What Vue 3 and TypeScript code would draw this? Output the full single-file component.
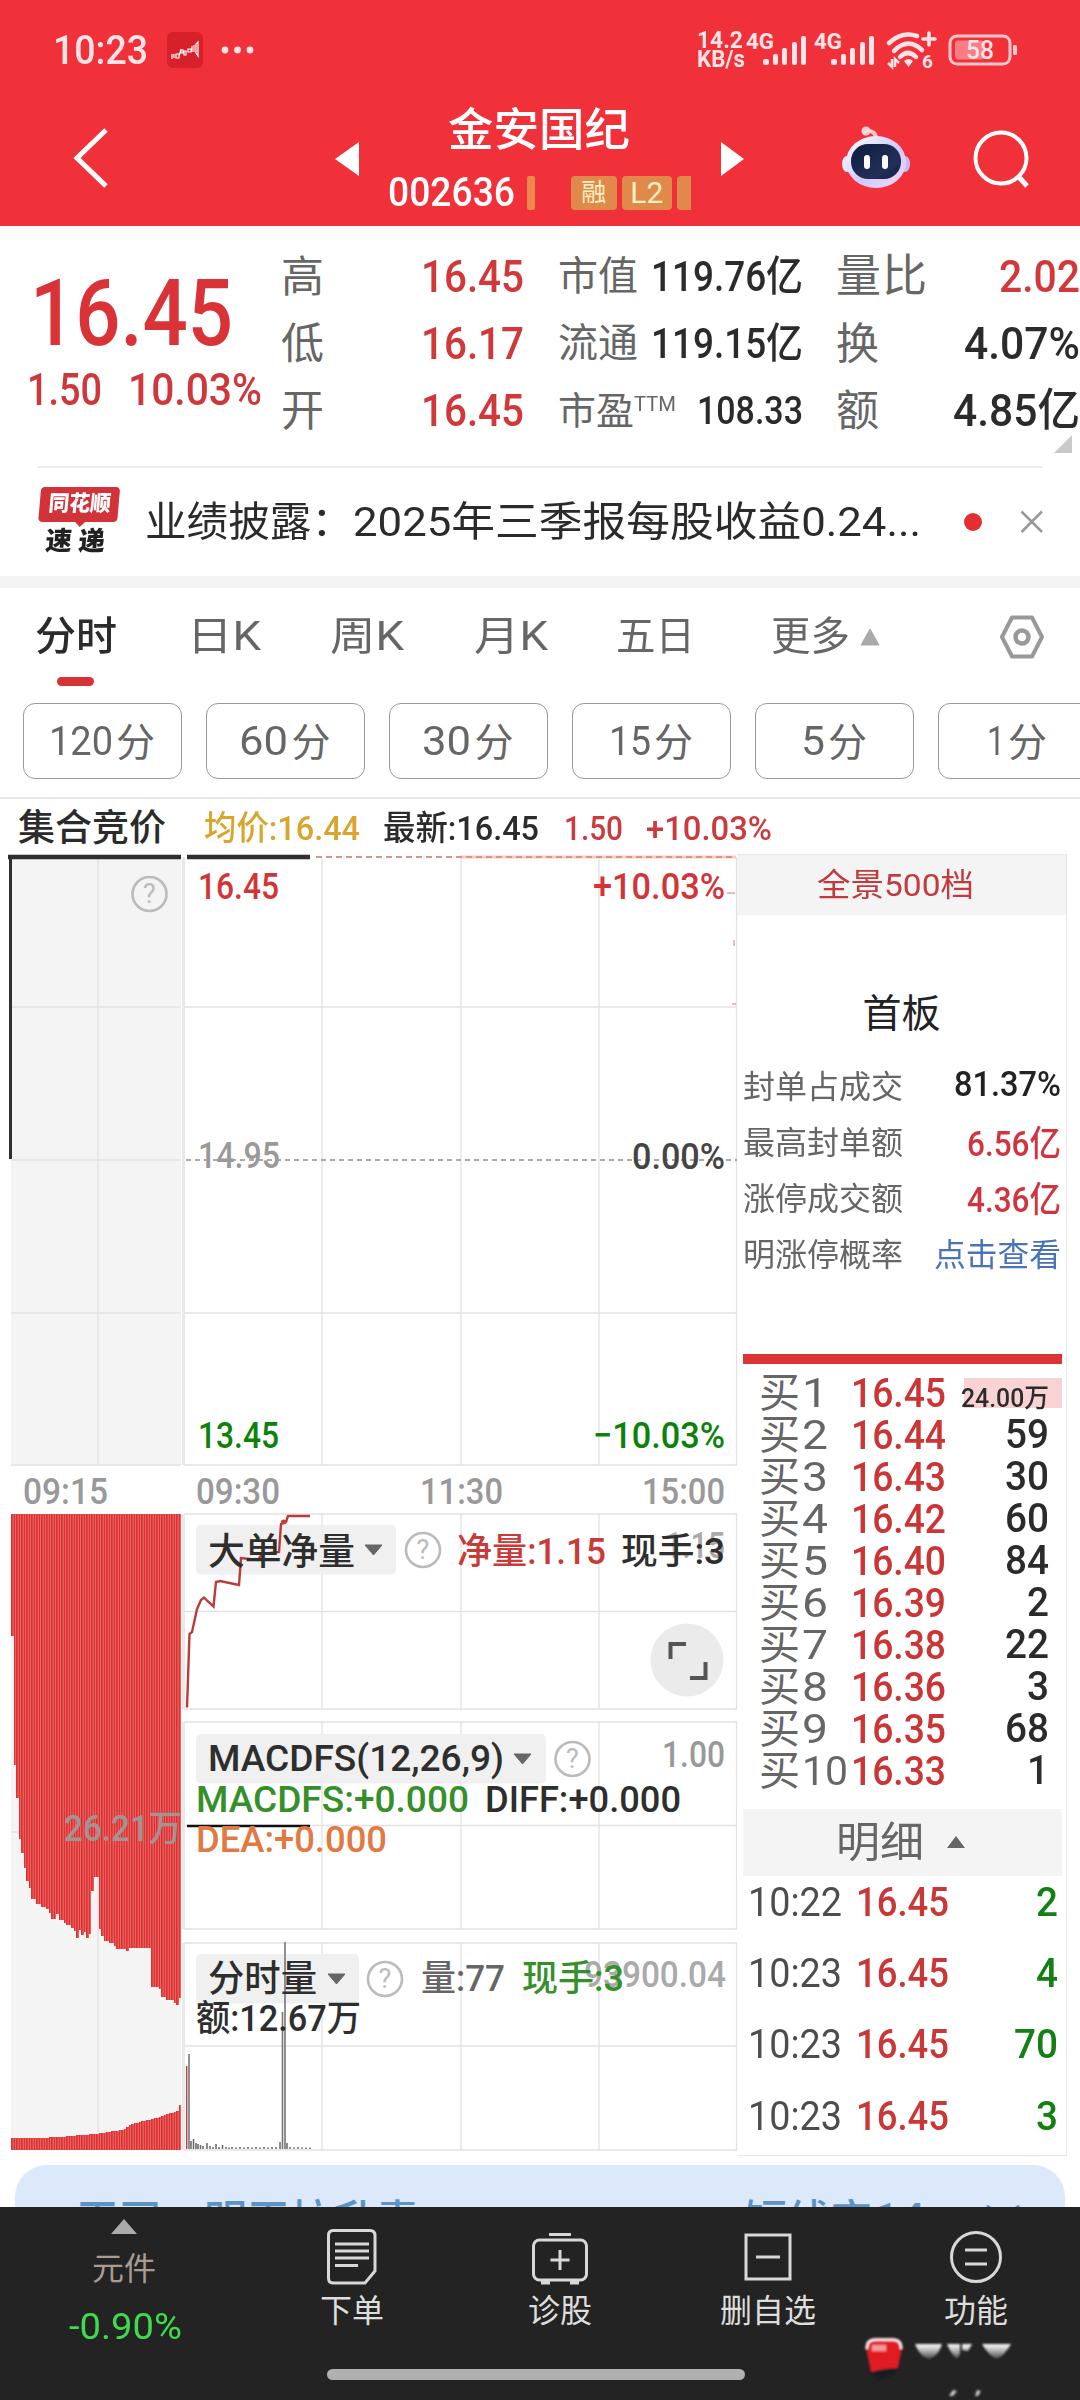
<script setup lang="ts">
interface Label { t: string; x: number; y: number; w: number; s: number; c: string; b?: number }
type Point = [number, number]

// Scales a piece of text horizontally so it takes exactly the given width.
const vFit = {
  mounted(el: HTMLElement, binding: { value: number }) {
    el.style.display = 'inline-block'
    el.style.whiteSpace = 'nowrap'
    el.style.width = 'max-content'
    el.style.flex = 'none'
    const natural = el.getBoundingClientRect().width
    el.style.transformOrigin = '0 50%'
    el.style.transform = `scaleX(${binding.value / natural})`
    el.style.marginRight = `${binding.value - natural}px`
  },
}

const RED = '#d23537'
const INK = '#2e2e2e'
const GREY = '#999'
const GREEN = '#0c820c'

const tabs = [
  { t: '日K', w: 74, gap: 70 },
  { t: '周K', w: 74, gap: 69 },
  { t: '月K', w: 74, gap: 70 },
  { t: '五日', w: 79, gap: 68 },
  { t: '更多', w: 79, gap: 76 },
]
const periods = [
  { n: '120', w: 64 }, { n: '60', w: 49 }, { n: '30', w: 49 },
  { n: '15', w: 42 }, { n: '5', w: 24 }, { n: '1', w: 18 },
]

const stats = [
  { k: '封单占成交', v: '81.37%', w: 107, cls: 'ink' },
  { k: '最高封单额', v: '6.56亿', w: 94, cls: 'crimson' },
  { k: '涨停成交额', v: '4.36亿', w: 94, cls: 'crimson' },
  { k: '明涨停概率', v: '点击查看', w: 127, cls: 'link' },
]
const bids = [
  ['1', '16.45', '24.00万'], ['2', '16.44', '59'], ['3', '16.43', '30'], ['4', '16.42', '60'],
  ['5', '16.40', '84'], ['6', '16.39', '2'], ['7', '16.38', '22'], ['8', '16.36', '3'],
  ['9', '16.35', '68'], ['10', '16.33', '1'],
]
const trades = [
  ['10:22', '16.45', '2'], ['10:23', '16.45', '4'], ['10:23', '16.45', '70'], ['10:23', '16.45', '3'],
]

const labels: Label[] = [
  { t: '16.45', x: 198, y: 899, w: 81, s: 37, c: RED, b: 500 },
  { t: '+10.03%', x: 593, y: 899, w: 132, s: 37, c: RED, b: 500 },
  { t: '14.95', x: 198, y: 1168, w: 82, s: 36, c: GREY, b: 500 },
  { t: '0.00%', x: 632, y: 1169, w: 93, s: 36, c: '#444', b: 500 },
  { t: '13.45', x: 198, y: 1448, w: 81, s: 37, c: GREEN, b: 500 },
  { t: '−10.03%', x: 593, y: 1448, w: 132, s: 37, c: GREEN, b: 500 },
  { t: '09:15', x: 23, y: 1504, w: 85, s: 36, c: GREY, b: 500 },
  { t: '09:30', x: 196, y: 1504, w: 84, s: 36, c: GREY, b: 500 },
  { t: '11:30', x: 420, y: 1504, w: 83, s: 36, c: GREY, b: 500 },
  { t: '15:00', x: 642, y: 1504, w: 83, s: 36, c: GREY, b: 500 },
  { t: '26.21万', x: 64, y: 1841, w: 118, s: 36, c: '#a39494', b: 500 },
  { t: '大单净量', x: 208, y: 1565, w: 147, s: 37, c: INK, b: 500 },
  { t: '1.15', x: 665, y: 1558, w: 60, s: 36, c: '#aaa', b: 500 },
  { t: '净量:1.15', x: 457, y: 1564, w: 149, s: 36, c: '#c93a38', b: 500 },
  { t: '现手:3', x: 621, y: 1564, w: 104, s: 36, c: INK, b: 500 },
  { t: 'MACDFS(12,26,9)', x: 208, y: 1771, w: 296, s: 37, c: INK, b: 500 },
  { t: '1.00', x: 662, y: 1767, w: 63, s: 36, c: GREY, b: 500 },
  { t: 'MACDFS:+0.000', x: 196, y: 1812, w: 273, s: 37, c: '#35902a', b: 500 },
  { t: 'DIFF:+0.000', x: 485, y: 1812, w: 196, s: 37, c: INK, b: 500 },
  { t: 'DEA:+0.000', x: 196, y: 1852, w: 191, s: 37, c: '#e07a42', b: 500 },
  { t: '分时量', x: 208, y: 1992, w: 109, s: 37, c: INK, b: 500 },
  { t: '量:77', x: 421, y: 1991, w: 84, s: 36, c: '#666', b: 500 },
  { t: '93900.04', x: 584, y: 1987, w: 142, s: 36, c: '#aaa', b: 500 },
  { t: '现手:3', x: 522, y: 1991, w: 102, s: 36, c: '#35902a', b: 500 },
  { t: '额:12.67万', x: 196, y: 2031, w: 165, s: 36, c: INK, b: 500 },
]

const pills = [
  { x: 196, y: 1525, w: 200, ax: 365, q: 423 },
  { x: 196, y: 1734, w: 350, ax: 514, q: 572.5 },
  { x: 196, y: 1954, w: 163, ax: 328, q: 385 },
]

// Call-auction depth: lower edge of the hanging bars, upper edge of the rising ones.
const hang: Point[] = [
  [11, 1636], [13.4, 1765], [15.8, 1798], [18, 1839], [20.5, 1853], [23, 1868], [26, 1881], [28.5, 1888], [31, 1899],
  [35, 1904], [40, 1907], [44, 1909], [47, 1913], [50, 1919], [54, 1914], [58, 1920], [62, 1923], [66, 1925], [70, 1928],
  [73, 1931], [75, 1938], [77, 1930], [80, 1935], [83, 1932], [86, 1938], [88.5, 1934], [90.5, 1891], [93.5, 1877],
  [96.5, 1929], [99, 1936], [102, 1941], [107, 1943], [112, 1946], [116, 1949], [125, 1951], [128, 1948], [149.5, 1987],
  [158, 1989], [160, 1997], [165, 2000], [172, 2003], [176, 2005], [178, 1998], [182, 1998],
]
const rise: Point[] = [
  [11, 2138], [40, 2138], [65, 2136.5], [80, 2135], [95, 2134], [108, 2132], [125, 2129], [127.5, 2125], [140, 2121.5],
  [155, 2118], [165, 2114], [177, 2111], [178, 2105], [182, 2105],
]
const levelAt = (pts: Point[], x: number): number => {
  let v = pts[0][1]
  for (const p of pts) if (p[0] <= x + 0.01) v = p[1]
  return v
}
const smoothAt = (pts: Point[], x: number): number => {
  for (let i = 1; i < pts.length; i++) {
    if (x <= pts[i][0]) {
      const [x0, y0] = pts[i - 1]
      const [x1, y1] = pts[i]
      return y0 + ((y1 - y0) * (x - x0)) / (x1 - x0)
    }
  }
  return pts[pts.length - 1][1]
}
const auction = Array.from({ length: 68 }, (_, i) => {
  const x = 11 + i * 2.5
  return { x, bottom: levelAt(hang, x), top: smoothAt(rise, x) }
})

const volumes: Point[] = [
  [191, 8], [193.5, 10], [196, 6], [198, 5], [200.5, 4], [203, 3], [207, 6], [210, 3], [213, 2], [216, 5], [219, 2],
  [222.5, 4], [226, 2], [229, 1.5], [232, 2], [236, 1.5], [240, 2], [244, 1.5], [248, 2], [252, 1.5], [256, 2],
  [260, 1.5], [264, 2], [268, 1.5], [272, 2], [276, 2], [280, 7], [287, 6], [290, 2], [294, 1.5], [298, 2],
  [302, 1.5], [306, 1.5], [310, 1.5],
]
</script>

<template>
  <div class="screen">
    <header class="top">
      <div class="status">
        <span class="clock" v-fit="95">10:23</span>
        <svg class="appicon" width="36" height="36" viewBox="0 0 36 36">
          <rect width="36" height="36" rx="6" fill="#d6212a" />
          <g fill="none" stroke="#fff" stroke-width="1.2">
            <path d="M5 22v5M7 22v4M9 22h3v4h-3zM12 24l2-7M14 18h2v3h-2zM17 19h2v4h-2zM21 17h3v3h-3zM25 14v6M27 13v7M29 12l2-2v14l-2-3z" />
          </g>
        </svg>
        <svg class="dots" width="34" height="8"><circle cx="4" cy="4" r="3.4" /><circle cx="16.5" cy="4" r="3.4" /><circle cx="29" cy="4" r="3.4" /></svg>
        <div class="speed"><span v-fit="46">14.2</span><span v-fit="48">KB/s</span></div>
        <svg v-for="n in 2" :key="n" class="signal" width="62" height="36" viewBox="0 0 62 36">
          <text x="0" y="16.5" textLength="28" lengthAdjust="spacingAndGlyphs">4G</text>
          <g fill="#ffe3e6">
            <rect x="17" y="27" width="6" height="6" rx="2" /><rect x="27" y="22" width="5" height="11" rx="2" />
            <rect x="36" y="16" width="5" height="17" rx="2" /><rect x="46" y="10" width="5" height="23" rx="2" />
            <rect x="55" y="4" width="5" height="29" rx="2" />
          </g>
        </svg>
        <svg class="wifi" width="52" height="40" viewBox="0 0 52 40">
          <g fill="none" stroke="#ffe3e6" stroke-width="4.5" stroke-linecap="round">
            <path d="M3 13 Q16 1 31 6" /><path d="M8 21 Q22 7 36 20" /><path d="M14 27 Q22 19 30 27" />
            <path d="M43 3v12M37 9h12" stroke-width="3.6" />
          </g>
          <path d="M18 31 q4.500 -4 9 0 l-4.500 6z" fill="#ffe3e6" />
          <path d="M6 29v8l-4-4M9 37v-8l4 4" fill="none" stroke="#ffe3e6" stroke-width="2.500" />
          <text x="36" y="38">6</text>
        </svg>
        <svg class="battery" width="72" height="32" viewBox="0 0 72 32">
          <rect x="2" y="2" width="60" height="28" rx="7" fill="none" stroke="#ffc6cb" stroke-width="3" />
          <rect x="7" y="6.500" width="29" height="19" rx="3" fill="#fb7d83" />
          <rect x="65" y="11" width="4" height="10" rx="1.500" fill="#ffc6cb" />
          <text x="18" y="24.500" textLength="28" lengthAdjust="spacingAndGlyphs">58</text>
        </svg>
      </div>
      <div class="titlebar">
        <svg class="back" width="36" height="64" viewBox="0 0 36 64"><path d="M33 4 L4 32 L33 60" fill="none" stroke="#fff" stroke-width="5" /></svg>
        <svg class="prev" width="24" height="36"><path d="M0 18 L24 1 V35z" fill="#fff" /></svg>
        <div class="name">
          <div class="stock" v-fit="182">金安国纪</div>
          <div class="code">
            <span class="digits" v-fit="127">002636</span>
            <i class="stub"></i>
            <b class="tag rong">融</b><b class="tag l2">L2</b><b class="tag cut"></b>
          </div>
        </div>
        <svg class="next" width="24" height="36"><path d="M0 1 L23 18 L0 35z" fill="#fff" /></svg>
        <svg class="robot" width="68" height="64" viewBox="0 0 68 64">
          <defs>
            <linearGradient id="shell" x1="0" y1="0" x2="1" y2="1"><stop offset="0" stop-color="#fff" /><stop offset=".55" stop-color="#cfc9fb" /><stop offset="1" stop-color="#f9d9ee" /></linearGradient>
            <linearGradient id="visor" x1="0" y1="0" x2="1" y2="1"><stop offset="0" stop-color="#0f1b3f" /><stop offset=".7" stop-color="#223058" /><stop offset="1" stop-color="#131a45" /></linearGradient>
          </defs>
          <path d="M24 5 Q34 4 34 13" fill="none" stroke="#ffc9d0" stroke-width="4" /><circle cx="24" cy="5" r="4.500" fill="#ffd5da" />
          <ellipse cx="5" cy="38" rx="5" ry="8" fill="#e9e6ff" /><ellipse cx="63" cy="38" rx="5" ry="8" fill="#c9b8f5" />
          <ellipse cx="34" cy="36" rx="30" ry="26" fill="url(#shell)" />
          <rect x="9" y="18" width="50" height="35" rx="17" fill="url(#visor)" />
          <rect x="22" y="29" width="6" height="14" rx="3" fill="#fff" /><rect x="40" y="29" width="6" height="14" rx="3" fill="#fff" />
        </svg>
        <svg class="search" width="60" height="60" viewBox="0 0 60 60"><circle cx="29" cy="28" r="25.500" fill="none" stroke="#fff" stroke-width="4" /><path d="M46 46 L55 56" stroke="#fff" stroke-width="5" /></svg>
      </div>
    </header>

    <section class="quote">
      <div class="last">
        <div class="price" v-fit="203">16.45</div>
        <div class="change"><span v-fit="75">1.50</span><span v-fit="134">10.03%</span></div>
      </div>
      <div class="col c1"><div><em>高</em><span v-fit="103">16.45</span></div><div><em>低</em><span v-fit="103">16.17</span></div><div><em>开</em><span v-fit="103">16.45</span></div></div>
      <div class="col c2">
        <div><em>市值</em><span v-fit="152">119.76亿</span></div><div><em>流通</em><span v-fit="152">119.15亿</span></div>
        <div><em class="pe">市盈<sup v-fit="42">TTM</sup></em><span class="small" v-fit="106">108.33</span></div>
      </div>
      <div class="col c3"><div><em class="ratio">量比</em><span class="red" v-fit="81">2.02</span></div><div><em>换</em><span v-fit="116">4.07%</span></div><div><em>额</em><span v-fit="127">4.85亿</span></div></div>
    </section>
    <svg class="corner" width="18" height="18"><path d="M18 0V18H0z" fill="#c9c9c9" /></svg>

    <section class="news">
      <div class="brand"><div class="bubble"><span v-fit="65">同花顺</span></div><div class="express"><span v-fit="62">速 递</span></div></div>
      <div class="headline"><span v-fit="208">业绩披露：</span><span v-fit="568">2025年三季报每股收益0.24...</span></div>
      <i class="reddot"></i>
      <svg class="close" width="24" height="24"><path d="M1.500 1.500 L22 22 M22 1.500 L1.500 22" stroke="#999" stroke-width="2.500" /></svg>
    </section>

    <nav class="tabs">
      <div class="active"><span v-fit="82">分时</span></div>
      <span v-for="t in tabs" :key="t.t" :style="{ marginLeft: t.gap + 'px' }"><span v-fit="t.w">{{ t.t }}</span></span>
      <svg class="up" width="20" height="18"><path d="M10 1 L19 17 H1z" fill="#aaa" stroke="#aaa" stroke-linejoin="round" /></svg>
      <svg class="gear" width="46" height="46" viewBox="0 0 46 46"><path d="M13 3.500 H33 L43 23 L33 42.500 H13 L3 23z" fill="none" stroke="#999" stroke-width="4" stroke-linejoin="round" /><circle cx="23" cy="23" r="6.500" fill="none" stroke="#999" stroke-width="4.500" /></svg>
    </nav>
    <div class="periods"><button v-for="p in periods" :key="p.n"><span v-fit="p.w">{{ p.n }}</span><span class="fen">分</span></button></div>

    <div class="info">
      <span class="auction" v-fit="148">集合竞价</span><span class="avg" v-fit="156">均价:16.44</span><span class="new" v-fit="156">最新:16.45</span>
      <span class="r1" v-fit="59">1.50</span><span class="r2" v-fit="126">+10.03%</span>
    </div>

    <main class="board">
      <svg class="chart" width="737" height="1308" viewBox="0 852 737 1308">
        <rect x="11" y="857" width="170" height="608" fill="#f4f4f4" /><rect x="11" y="1514" width="170" height="636" fill="#f4f4f4" />
        <path d="M98 857V1465M98 1514V2150M11 1007H181M11 1160H181M11 1313H181M11 1465H181M11 1832H181" stroke="#e2e2e2" stroke-width="1.500" />
        <path d="M183.500 857V1465M183.500 1514V1709M183.500 1722V1929M183.500 1943V2150" stroke="#e9e9e9" stroke-width="3" />
        <g stroke="#e2e2e2" stroke-width="1.300" fill="none">
          <path v-for="x in [322, 461, 599, 736.500]" :key="x" :d="`M${x} 857V1465M${x} 1514V1709M${x} 1722V1929M${x} 1943V2150`" />
          <path v-for="y in [1007, 1313, 1465, 1514, 1611.500, 1709, 1722, 1825.500, 1929, 1943, 2046, 2150]" :key="y" :d="`M184 ${y}H737`" />
        </g>
        <path d="M186 1160H737" stroke="#aaa" stroke-width="2" stroke-dasharray="5 4" />
        <path d="M460 857H736" stroke="#f6c9c2" stroke-width="3" /><path d="M316 857H736" stroke="#d09a85" stroke-width="2" stroke-dasharray="6 4" />
        <path d="M8 857H181M187 857H310" stroke="#2f2f2f" stroke-width="4.500" /><path d="M10.500 857V1159" stroke="#2f2f2f" stroke-width="3" />
        <path d="M727 893h8M734 940v6M732 1004h4" stroke="#e9bcbc" stroke-width="2" />
        <g v-for="b in auction" :key="b.x">
          <path :d="`M${b.x} 1514h2.500V${b.bottom}h-2.500zM${b.x} ${b.top}h2.500V2150h-2.500z`" fill="#dc3234" shape-rendering="crispEdges" />
          <path :d="`M${b.x + 2.200} 1514V${b.bottom}M${b.x + 2.200} ${b.top}V2150`" stroke="#f79a94" stroke-width="0.600" />
        </g>

        <g v-for="p in pills" :key="p.y">
          <rect :x="p.x" :y="p.y" :width="p.w" height="49.500" rx="5" fill="#efefef" fill-opacity=".94" />
          <path :d="`M${p.ax} ${p.y + 20}h17l-8.500 10z`" fill="#666" stroke="#666" stroke-linejoin="round" />
          <circle :cx="p.q" :cy="p.y + 25" r="17" fill="none" stroke="#bbb" stroke-width="2.600" />
          <text class="q" :x="p.q" :y="p.y + 34">?</text>
        </g>
        <circle cx="149.500" cy="894" r="17" fill="none" stroke="#bbb" stroke-width="2.600" /><text class="q" x="149.500" y="903">?</text>

        <path d="M187 1707.500L189.500 1634L192 1632L197 1609L201 1600L204 1597.500L208 1601.500L213.500 1606.500L216 1582L220 1581L239 1585L241 1558L258 1560L262 1554L279 1552L281 1524L286 1522L288 1516H310" fill="none" stroke="#bc3b39" stroke-width="2.400" />
        <circle cx="283.500" cy="1522" r="2.500" fill="#c93a38" />
        <path d="M187 1826H310" stroke="#111" stroke-width="2.500" />
        <path d="M186.700 2066V2149" stroke="#b04a4a" stroke-width="1.500" /><path d="M189 2054V2149M282.500 2012V2149M285 1942V2149" stroke="#777" stroke-width="1.600" />
        <path v-for="v in volumes" :key="v[0]" :d="`M${v[0]} 2149V${2149 - v[1]}`" stroke="#666" stroke-width="1.500" />
        <circle cx="687" cy="1660" r="36.500" fill="#ebebeb" />
        <path d="M670.500 1659V1644H686M690 1678H705.500V1662" fill="none" stroke="#555" stroke-width="4" />
        <text v-for="l in labels" :key="l.t + l.y" :x="l.x" :y="l.y" :font-size="l.s" :fill="l.c" :font-weight="l.b ?? 400" :textLength="l.w" lengthAdjust="spacingAndGlyphs">{{ l.t }}</text>
      </svg>

      <aside class="book">
        <div class="depth"><span v-fit="157">全景500档</span></div>
        <div class="board-name">首板</div>
        <div class="stats"><div v-for="s in stats" :key="s.k"><span v-fit="160">{{ s.k }}</span><span :class="s.cls" v-fit="s.w">{{ s.v }}</span></div></div>
        <div class="redbar"></div>
        <div class="bids">
          <div v-for="(b, i) in bids" :key="b[0]" class="bid">
            <span class="who"><span>买</span><span v-fit="b[0].length > 1 ? 46 : 26">{{ b[0] }}</span></span>
            <span class="bp"><span v-fit="95">{{ b[1] }}</span></span>
            <span :class="['vol', { first: i === 0 }]"><span v-fit="i === 0 ? 88 : b[2].length * 22">{{ b[2] }}</span></span>
          </div>
        </div>
        <div class="detail"><span v-fit="88">明细</span><svg width="18" height="13"><path d="M9 0L18 12H0z" fill="#666" /></svg></div>
        <div class="trades">
          <div v-for="(t, i) in trades" :key="i"><span v-fit="94">{{ t[0] }}</span><span class="tp" v-fit="93">{{ t[1] }}</span><span class="tv"><span v-fit="t[2].length * 22">{{ t[2] }}</span></span></div>
        </div>
      </aside>
    </main>

    <div class="promo"><span class="p1">天司</span><span class="p2">明天拉升青</span><span class="p3">短线宝<b>14</b></span><span class="p4">﹀</span></div>

    <footer class="dock">
      <div class="index"><svg width="26" height="15"><path d="M13 0L26 15H0z" fill="#ababab" /></svg><span class="iname">元件</span><span class="pct" v-fit="113">-0.90%</span></div>
      <div class="item"><svg width="60" height="60" viewBox="0 0 60 60"><path d="M11 3.500H48Q53 3.500 53 8.500V44L43 56H11Q6.500 56 6.500 51V8.500Q6.500 3.500 11 3.500z" /><path d="M13 17H47M13 24H47M13 31H47M13 38.500H36" /></svg><span>下单</span></div>
      <div class="item"><svg width="60" height="60" viewBox="0 0 60 60"><rect x="3.500" y="13" width="53" height="40" rx="6" /><path d="M19 7.500H41M30 23V43M20.500 33H39.500" /><path d="M11 55.500h9M40 55.500h9" stroke-width="4" /></svg><span>诊股</span></div>
      <div class="item"><svg width="60" height="60" viewBox="0 0 60 60"><rect x="8" y="8" width="44" height="44" /><path d="M18 30H42" /></svg><span>删自选</span></div>
      <div class="item"><svg width="60" height="60" viewBox="0 0 60 60"><circle cx="30" cy="30" r="24.500" /><path d="M19 23H41M19 37H41" /></svg><span>功能</span></div>
      <i class="home"></i>
      <svg class="mark" width="210" height="66" viewBox="0 0 210 66">
        <defs>
          <linearGradient id="fade" x1="0" y1="0" x2="0" y2="1"><stop offset="0" stop-color="#fff" /><stop offset=".5" stop-color="#aaa" /><stop offset="1" stop-color="#444" /></linearGradient>
          <filter id="soft" x="-10%" y="-10%" width="120%" height="120%"><feGaussianBlur stdDeviation="0.800" /></filter>
        </defs>
        <g filter="url(#soft)">
          <path d="M3 36L34 33L28 40L14 46z" fill="#171b24" />
          <path d="M1 14Q1 4 10 4H28Q37 4 37 14L33 34Q20 34 6 38z" fill="#e01b22" /><path d="M1.500 15Q1.500 5.500 10 5.500H28Q36.500 5.500 36.500 15" fill="none" stroke="#fff" stroke-width="2.500" />
          <path d="M7 11h14v6h-14z" fill="#f29a9a" />
          <path d="M50 10H77Q73 23 64 25Q55 23 50 10zM82 10H95V20L92 25Q86 20 82 10zM97 10H107L103 17L97 16zM117 10H146Q139 22 132 25Q124 22 117 10z" fill="url(#fade)" />
          <path d="M84 62l4-6 4 1-4 5zM110 62l2-6 4 1-3 5z" fill="#ccc" />
        </g>
      </svg>
    </footer>
  </div>
</template>

<style>
body { background: #fff; }
</style>

<style scoped>
.screen { width: 1080px; height: 2400px; overflow: hidden; background: #fff; display: flex; flex-direction: column; font-family: Roboto, "Noto Sans CJK SC", sans-serif; color: #333; }
.screen svg { flex: none; display: block; overflow: visible; }
em, i { font-style: normal; }
.top { height: 226px; background: #f13139; color: #fff; flex: none; }
.status { height: 100px; display: flex; align-items: center; color: #ffe3e6; }
.clock { font-size: 40px; margin-left: 53px; font-weight: 500; }
.appicon { margin-left: 19px; }
.dots { margin-left: 18px; fill: #ffe3e6; }
.speed { margin-left: 442px; width: 49px; display: flex; flex-direction: column; font-size: 23px; line-height: 19px; font-weight: 700; }
.signal { margin-right: 6px; }
.signal text { font: 700 22px Roboto; fill: #ffe3e6; }
.wifi { margin-left: 4px; }
.wifi text { font: 700 19px Roboto; fill: #ffe3e6; }
.battery { margin-left: 10px; }
.battery text { font: 500 25px Roboto; fill: #ffe3e6; }
.titlebar { height: 126px; display: flex; align-items: flex-start; }
.back { margin: 26px 0 0 73px; }
.prev { margin: 41px 0 0 226px; }
.name { margin: 5px 0 0 29px; width: 303px; }
.stock { margin-left: 60px; font-size: 45px; line-height: 52px; font-weight: 500; }
.code { display: flex; align-items: center; height: 34px; margin-top: 19px; }
.digits { font-size: 40px; line-height: 34px; font-weight: 500; }
.stub { width: 8px; height: 34px; background: #ee874b; margin: 0 36px 0 12px; border-radius: 2px; }
.tag { height: 34px; background: #e0894b; border-radius: 4px; color: #fff1c4; font-weight: 400; font-size: 25px; line-height: 34px; text-align: center; margin-right: 5px; }
.rong { width: 46px; }
.l2 { width: 51px; font-size: 30px; }
.cut { width: 14px; margin: 0; border-radius: 4px 0 0 4px; }
.next { margin: 41px 0 0 30px; }
.robot { margin: 26px 0 0 97px; }
.search { margin: 30px 0 0 62px; }

.quote { height: 240px; flex: none; display: flex; }
.last { width: 281px; padding-top: 41px; color: #d93337; font-weight: 500; flex: none; }
.price { font-size: 92px; line-height: 94px; margin-left: 30px; }
.change { margin-left: 27px; display: flex; gap: 26px; font-size: 45px; line-height: 50px; margin-top: 4px; color: #cf383b; font-weight: 500; }
.col { padding-top: 17px; }
.col > div { height: 67px; display: flex; align-items: center; justify-content: space-between; }
.col em { color: #666; font-size: 43px; line-height: 60px; }
.col em.ratio { font-size: 45px; letter-spacing: 1px; }
.col span { font-size: 45px; line-height: 60px; font-weight: 500; color: #2b2b2b; }
.col.c1 { width: 243px; }
.col.c1 span, .col span.red { color: #d0383a; }
.col.c2 { width: 245px; margin-left: 34px; }
.col.c2 em { font-size: 40px; }
.col.c2 span { font-size: 42px; }
.col.c2 span.small { font-size: 39px; }
.col.c2 em.pe { font-size: 38px; display: flex; }
.pe sup { font-size: 21px; line-height: 34px; margin-top: 6px; }
.col.c3 { width: 244px; margin-left: 33px; }
.corner { margin: -31px 0 13px 1054px; }
.news { height: 108px; flex: none; margin: 0; display: flex; align-items: center; border-bottom: 12px solid #f4f4f4; background: linear-gradient(#eee, #eee) 37px 0 / 1006px 2px no-repeat; padding-top: 2px; }
.brand { width: 79px; margin: 2px 0 0 38px; transform: skewX(-5deg); }
.bubble { background: #d23339; height: 35px; border-radius: 4px; color: #fff; font-weight: 900; font-size: 22px; line-height: 34px; display: flex; justify-content: center; }
.bubble::after { content: ""; position: absolute; top: 34px; left: 36px; border: 6px solid transparent; border-top-color: #d23339; }
.express { font-weight: 900; font-size: 26px; line-height: 30px; color: #222; padding-left: 9px; height: 34px; margin-top: 4px; }
.headline { margin-left: 28px; width: 776px; font-size: 41px; line-height: 60px; display: flex; color: #2b2b2b; }
.reddot { width: 18px; height: 18px; border-radius: 9px; background: #e32f2f; margin-left: 43px; }
.close { margin-left: 38px; }

.tabs { height: 97px; flex: none; display: flex; align-items: center; font-size: 40px; color: #666; position: relative; padding-left: 35px; box-sizing: border-box; line-height: 60px; }
.active { color: #2b2b2b; font-weight: 500; position: relative; }
.active::after { content: ""; position: absolute; left: 22px; top: 70px; width: 37px; height: 9px; border-radius: 5px; background: #d73337; }
.up { margin-left: 10px; }
.gear { margin-left: 119px; }
.periods { display: flex; gap: 24px; padding: 18px 0 0 23px; height: 94px; flex: none; border-bottom: 2px solid #e6e6e6; overflow: hidden; }
.periods button { flex: none; width: 159px; height: 76px; box-sizing: border-box; border: 1.500px solid #999; border-radius: 12px; background: #fff; font: 400 41px Roboto, "Noto Sans CJK SC", sans-serif; color: #666; display: flex; align-items: center; justify-content: center; padding: 0 1px 0 0; }
.fen { font-size: 39px; margin: 0 0 5px 3px; }

.info { height: 53px; flex: none; display: flex; align-items: center; font-size: 34px; line-height: 56px; padding-top: 4px; box-sizing: border-box; }
.auction { margin-left: 18px; font-size: 37px; font-weight: 500; color: #2b2b2b; padding-top: 2px; }
.avg { margin-left: 38px; color: #d9a52c; font-weight: 500; }
.new { margin-left: 23px; font-weight: 500; color: #2b2b2b; }
.r1 { margin-left: 25px; color: #cb3a3c; font-weight: 500; }
.r2 { margin-left: 23px; color: #cb3a3c; font-weight: 500; }

.board { height: 1308px; flex: none; display: flex; }
.chart text { font-family: Roboto, "Noto Sans CJK SC", sans-serif; }
.chart text.q { font-size: 27px; fill: #bbb; text-anchor: middle; }
.book { width: 330px; height: 1302px; margin-top: 2px; border: 1.500px solid #e6e6e6; border-left: 0; box-sizing: border-box; }
.depth { height: 60px; background: #f4f4f4; display: flex; justify-content: center; font-size: 32px; line-height: 60px; color: #c03a3e; margin-right: 12px; box-shadow: 12px 0 #f4f4f4; }
.board-name { font-size: 39px; line-height: 60px; text-align: center; margin-top: 69px; color: #222; }
.stats { margin: 12px 5px 0 6px; }
.stats > div { height: 56px; display: flex; align-items: center; justify-content: space-between; font-size: 32px; color: #666; }
.stats .ink { font-size: 35px; color: #222; font-weight: 500; }
.stats .crimson { font-size: 35px; color: #d1343f; font-weight: 500; }
.stats .link { color: #4a73b8; }
.redbar { height: 10px; margin: 74px 4px 0 6px; background: #da3434; }
.bids { padding: 8px 0 0 22px; }
.bid { height: 42px; display: flex; align-items: center; font-size: 41px; line-height: 42px; }
.who { width: 92px; flex: none; display: flex; gap: 2px; color: #666; }
.bp { width: 113px; flex: none; color: #cb3536; font-weight: 500; }
.vol { width: 98px; height: 30px; line-height: 30px; flex: none; display: flex; justify-content: flex-end; padding-right: 13px; box-sizing: border-box; color: #2b2b2b; }
.vol { font-weight: 500; font-size: 40px; }
.vol.first { background: #f8d3d4; font-size: 26px; line-height: 40px; }
.detail { height: 67px; margin: 17px 4px 0 6px; background: #f4f4f4; display: flex; align-items: center; font-size: 42px; color: #666; padding-left: 93px; gap: 23px; line-height: 62px; }
.trades { padding: 0 8px 0 11px; margin-top: -10px; }
.trades > div { height: 71.400px; display: flex; align-items: center; font-size: 41px; color: #4d4d4d; }
.tp { color: #c93838; font-weight: 500; margin-left: 14px; }
.tv { margin-left: auto; color: #128012; font-weight: 500; }

.promo { height: 42px; margin: 5px 15px 0; border-radius: 32px 32px 0 0; background: #dbe9fa; overflow: hidden; display: flex; flex: none; color: #5b93c6; font-size: 43px; line-height: 60px; font-weight: 500; }
.promo span { margin-top: 26px; white-space: nowrap; flex: none; }
.promo b { font-size: 46px; line-height: 50px; font-weight: 500; }
.p1 { margin-left: 61px; width: 128px; }
.p2 { width: 540px; }
.p3 { width: 241px; }
.promo .p4 { margin-top: 28px; font-size: 36px; }
.dock { height: 193px; flex: none; background: #232323; display: flex; position: relative; color: #ddd; }
.index { width: 250px; display: flex; flex-direction: column; padding-top: 12px; box-sizing: border-box; }
.index svg { margin-left: 111px; }
.iname { font-size: 32px; line-height: 44px; margin: 13px 0 0 92px; color: #a89c92; }
.pct { font-size: 36px; line-height: 44px; color: #3fda4d; margin: 14px 0 0 69px; }
.item { width: 208px; display: flex; flex-direction: column; align-items: center; padding-top: 20px; box-sizing: border-box; font-size: 32px; line-height: 44px; flex: none; }
.item svg { fill: none; stroke: #d8d8d8; stroke-width: 3; margin-bottom: 2px; }
.index + .item { margin-left: -2px; }
.home { position: absolute; left: 327px; top: 162px; width: 418px; height: 11px; border-radius: 6px; background: #b0b0b0; }
.mark { position: absolute; left: 865px; top: 127px; }
</style>
